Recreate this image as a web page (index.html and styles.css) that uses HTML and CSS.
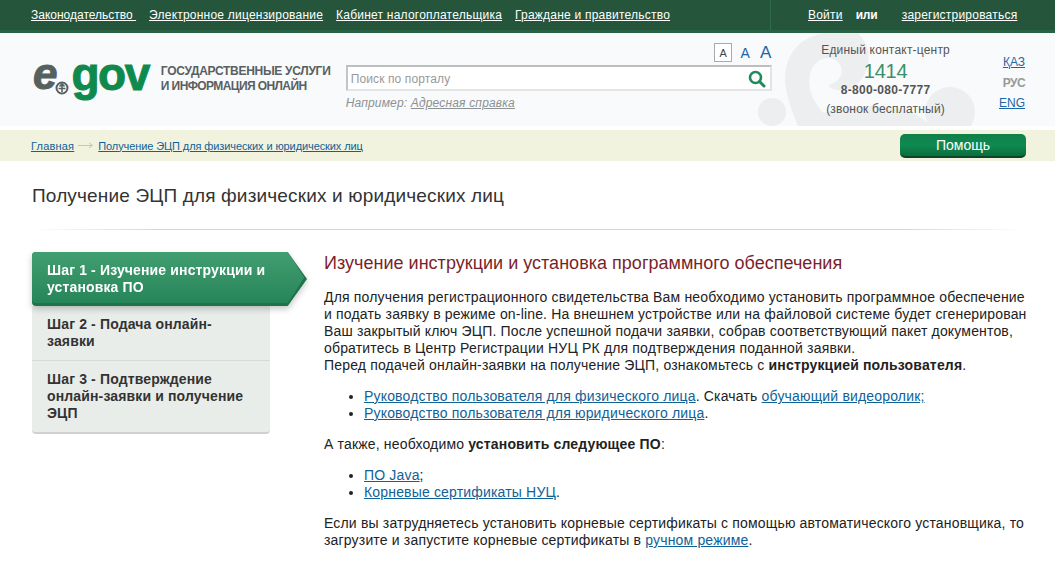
FILE: index.html
```html
<!DOCTYPE html>
<html lang="ru">
<head>
<meta charset="utf-8">
<title>Получение ЭЦП</title>
<link rel="stylesheet" href="styles.css">
</head>
<body>
<div class="topbar">
  <nav class="topnav">
    <a class="nav-first" href="#">Законодательство&nbsp;</a>
    <a href="#">Электронное лицензирование</a>
    <a href="#">Кабинет налогоплательщика</a>
    <a href="#">Граждане и правительство</a>
  </nav>
  <div class="auth">
    <a href="#">Войти</a>
    <span class="or">или</span>
    <a href="#">зарегистрироваться</a>
  </div>
</div>
<header class="header">
  <svg class="ornament" width="240" height="93" viewBox="0 0 240 93" aria-hidden="true">
    <g fill="#eceef0">
      <path fill-rule="evenodd" d="M48 93C40 72 30 50 38 28 45 10 60 2 76 0L108 0C122 14 122 34 110 48 100 59 84 60 78 52 88 50 94 42 91 34 87 24 74 22 66 30 56 40 58 58 66 70 72 80 80 88 88 93Z"/>
      <circle cx="22" cy="79" r="14"/>
      <circle cx="200" cy="79" r="25"/>
      <path d="M47 93C70 76 110 68 150 76 168 80 176 88 180 93Z"/>
    </g>
  </svg>
  <div class="logo"><span class="logo-e">e</span><svg class="logo-mark" width="14" height="14" viewBox="0 0 14 14" aria-hidden="true"><circle cx="7" cy="7" r="5.500" fill="none" stroke="#56605f" stroke-width="2"/><path d="M7 3v8M4.500 5.500L7 3l2.500 2.500M3.500 7.500h7" fill="none" stroke="#56605f" stroke-width="1.600"/></svg><span class="logo-gov">gov</span></div>
  <div class="tagline">ГОСУДАРСТВЕННЫЕ УСЛУГИ<br><span class="tagline-second">И ИНФОРМАЦИЯ ОНЛАЙН</span></div>
  <div class="searchcol">
    <div class="sizes">
      <span class="size size-s">A</span>
      <span class="size size-m">A</span>
      <span class="size size-l">A</span>
    </div>
    <div class="searchbox">
      <span class="placeholder">Поиск по порталу</span>
      <svg width="18" height="18" viewBox="0 0 18 18" aria-hidden="true"><circle cx="7.500" cy="7.500" r="5.500" fill="none" stroke="#1f8a5b" stroke-width="2.600"/><path d="M11.500 11.500l4.500 4.500" stroke="#1f8a5b" stroke-width="3" stroke-linecap="round"/></svg>
    </div>
    <div class="example"><i>Например:</i> <a href="#"><i>Адресная справка</i></a></div>
  </div>
  <div class="contact">
    <div class="contact-title">Единый контакт-центр</div>
    <div class="contact-short">1414</div>
    <div class="contact-phone">8-800-080-7777</div>
    <div class="contact-note">(звонок бесплатный)</div>
  </div>
  <div class="langs">
    <a href="#">ҚАЗ</a>
    <span>РУС</span>
    <a href="#">ENG</a>
  </div>
</header>
<div class="crumbs">
  <div class="crumb-links">
    <a class="crumb-home" href="#">Главная</a>
    <svg width="16" height="7" viewBox="0 0 16 7" aria-hidden="true"><path d="M0 3.500h14M11 1l3.500 2.500L11 6" fill="none" stroke="#c4c7b6" stroke-width="1"/></svg>
    <a href="#">Получение ЭЦП для физических и юридических лиц</a>
  </div>
  <a class="help" href="#">Помощь</a>
</div>
<main class="page">
  <h1 class="title">Получение ЭЦП для физических и юридических лиц</h1>
  <div class="rule"></div>
  <div class="columns">
    <aside class="steps">
      <div class="step-shadow">
        <div class="step step-active"><span class="step-label">Шаг 1 - Изучение инструкции и установка ПО</span></div>
      </div>
      <div class="step-list">
        <div class="step">Шаг 2 - Подача онлайн-заявки</div>
        <div class="step step-line">Шаг 3 - Подтверждение онлайн-заявки и получение ЭЦП</div>
      </div>
    </aside>
    <article class="content">
      <h2 class="subtitle">Изучение инструкции и установка программного обеспечения</h2>
      <p class="para">Для получения регистрационного свидетельства Вам необходимо установить программное обеспечение и подать заявку в режиме on-line. На внешнем устройстве или на файловой системе будет сгенерирован Ваш закрытый ключ ЭЦП. После успешной подачи заявки, собрав соответствующий пакет документов, обратитесь в Центр Регистрации НУЦ РК для подтверждения поданной заявки.<br>Перед подачей онлайн-заявки на получение ЭЦП, ознакомьтесь с <b>инструкцией пользователя</b>.</p>
      <ul class="list">
        <li><a href="#">Руководство пользователя для физического лица</a>. Скачать <a href="#">обучающий видеоролик;</a></li>
        <li><a href="#">Руководство пользователя для юридического лица</a>.</li>
      </ul>
      <p class="para">А также, необходимо <b>установить следующее ПО</b>:</p>
      <ul class="list">
        <li><a href="#">ПО Java</a>;</li>
        <li><a href="#">Корневые сертификаты НУЦ</a>.</li>
      </ul>
      <p class="para">Если вы затрудняетесь установить корневые сертификаты с помощью автоматического установщика, то загрузите и запустите корневые сертификаты в <a href="#">ручном режиме</a>.</p>
    </article>
  </div>
</main>
</body>
</html>
```
FILE: styles.css
```css
* { box-sizing: border-box; }
html, body { margin: 0; padding: 0; }
body {
  font-family: "Liberation Sans", Arial, sans-serif;
  font-size: 14px;
  color: #222;
  background: #fff;
  overflow: hidden;
}
a { color: #0f6296; }

.topbar {
  height: 33px;
  background: #25563c;
  border-bottom: 3px solid #2a6244;
  display: flex;
  align-items: center;
  font-size: 12px;
  letter-spacing: .22px;
  padding: 0 39px 0 31px;
}
.topbar a { color: #fff; }
.topnav { display: flex; gap: 13px; flex: 0 0 740px; height: 30px; align-items: center; border-right: 1px solid #2f6a4a; }
.nav-first { letter-spacing: 0; }
.auth { display: flex; margin-left: 37px; }
.auth .or { color: #fff; font-weight: 700; letter-spacing: -.2px; margin: 0 13px; width: 33px; }

.header {
  position: relative;
  height: 93px;
  background: #f8fafb;
  display: flex;
  padding-left: 33px;
}
.ornament { position: absolute; left: 750px; top: 0; }
.header > div { position: relative; }
.logo {
  width: 128px;
  height: 50px;
  margin-top: 19px;
  display: flex;
  align-items: flex-start;
  font-weight: 700;
}
.logo-e { font-size: 44px; font-style: italic; color: #56605f; line-height: 44px; -webkit-text-stroke: 1px #56605f; }
.logo-mark { margin: 29px 2px 0 -2px; flex: none; }
.logo-gov { font-size: 46px; color: #0f8a4e; letter-spacing: -1.500px; line-height: 44px; -webkit-text-stroke: 1px #0f8a4e; }
.tagline {
  width: 185px;
  margin-top: 31px;
  font-size: 12px;
  line-height: 15px;
  font-weight: 700;
  letter-spacing: -.3px;
  color: #5a5f62;
}
.tagline-second { letter-spacing: -.6px; }
.searchcol { width: 427px; }
.sizes { display: flex; justify-content: flex-end; align-items: center; height: 25px; margin-top: 7px; gap: 7px; color: #1b67a3; }
.size { display: block; text-align: center; }
.size-s { width: 18px; height: 19px; border: 1px solid #aaa; background: #fff; font-size: 11px; line-height: 18px; color: #444; }
.size-m { font-size: 14px; width: 12px; }
.size-l { font-size: 17px; width: 13px; margin-left: 1px; }
.searchbox {
  height: 26px;
  background: #fff;
  border: 2px solid #e3e5e5;
  border-top-color: #bdbfbf;
  border-left-color: #c4c6c6;
  display: flex;
  align-items: center;
  justify-content: space-between;
  padding: 2px 4px 0 3px;
  font-size: 12px;
  letter-spacing: .12px;
  color: #999;
}
.example { margin-top: 5px; font-size: 12px; letter-spacing: .17px; color: #8d9193; }
.example a { color: #8d9193; }
.contact {
  width: 227px;
  text-align: center;
  font-size: 12px;
  letter-spacing: .2px;
  color: #555;
  padding: 10px 0 0 0;
}
.contact-title { line-height: 14px; }
.contact-short { font-size: 20px; letter-spacing: -.2px; line-height: 24px; color: #3c9068; margin-top: 2px; }
.contact-phone { font-weight: 700; letter-spacing: .3px; line-height: 15px; }
.contact-note { line-height: 22px; }
.langs {
  flex: 1;
  display: flex;
  flex-direction: column;
  align-items: flex-end;
  padding: 19px 30px 0 0;
  font-size: 12px;
  line-height: 20.500px;
  position: relative;
}
.langs span { color: #999; font-weight: 700; letter-spacing: -.6px; }
.langs a { color: #1b67a3; }

.crumbs {
  margin-top: 4px;
  height: 31px;
  background: #f2f3df;
  display: flex;
  align-items: center;
  justify-content: space-between;
  padding: 0 29px 0 31px;
  font-size: 11px;
}
.crumb-links { display: flex; align-items: center; gap: 4px; letter-spacing: -.1px; }
.crumb-home { letter-spacing: .2px; }
.help {
  display: block;
  width: 126px;
  height: 24px;
  border-radius: 5px;
  background: linear-gradient(#0e7f49, #0f8a50 50%, #0b6e3e);
  border-bottom: 2px solid #0a4429;
  color: #fff;
  font-size: 14px;
  text-align: center;
  line-height: 22px;
  text-decoration: none;
}

.page { padding-left: 32px; }
.title {
  margin: 0;
  padding-top: 23px;
  font-size: 19px;
  letter-spacing: .16px;
  line-height: 23px;
  font-weight: 400;
  color: #333;
}
.rule {
  height: 1px;
  margin: 22px 29px 0 0;
  background: linear-gradient(90deg, #fff, #d8d8d8 12%, #d8d8d8 88%, #fff);
}
.columns { display: flex; margin-top: 22px; }
.steps { flex: 0 0 292px; font-size: 14px; line-height: 17px; font-weight: 700; letter-spacing: .14px; }
.step { padding: 10px 16px 10px 15px; }
.step-shadow {
  position: relative;
  width: 275px;
  z-index: 1;
  filter: drop-shadow(0 3px 3px rgba(0,0,0,.22));
}
.step-active {
  position: relative;
  height: 54px;
  background: #1f7349;
  border-radius: 4px 0 0 4px;
  color: #fff;
  clip-path: polygon(0 0, 93% 0, 100% 50%, 93% 100%, 0 100%);
}
.step-active::before {
  content: "";
  position: absolute;
  left: 0;
  top: 0;
  right: 0;
  height: 51px;
  background: linear-gradient(#419e70, #27855a);
  border-radius: 4px 0 0 4px;
  clip-path: polygon(0 0, 93% 0, 99% 50%, 93% 100%, 0 100%);
}
.step-label { position: relative; display: block; }
.step-list {
  width: 238px;
  background: #e9edea;
  border-radius: 0 0 4px 4px;
  border-bottom: 2px solid #cfd2cf;
  color: #333;
}
.step-line { border-top: 1px solid #d7dad7; }

.content { flex: 1; padding-right: 24px; font-size: 14px; letter-spacing: .17px; line-height: 17px; color: #222; }
.subtitle { margin: 1px 0 15px; font-size: 18px; letter-spacing: .02px; line-height: 21px; font-weight: 400; color: #7b1f2b; }
.para { margin: 0; }
.list { margin: 14px 0; padding: 0 0 0 40px; }
```
